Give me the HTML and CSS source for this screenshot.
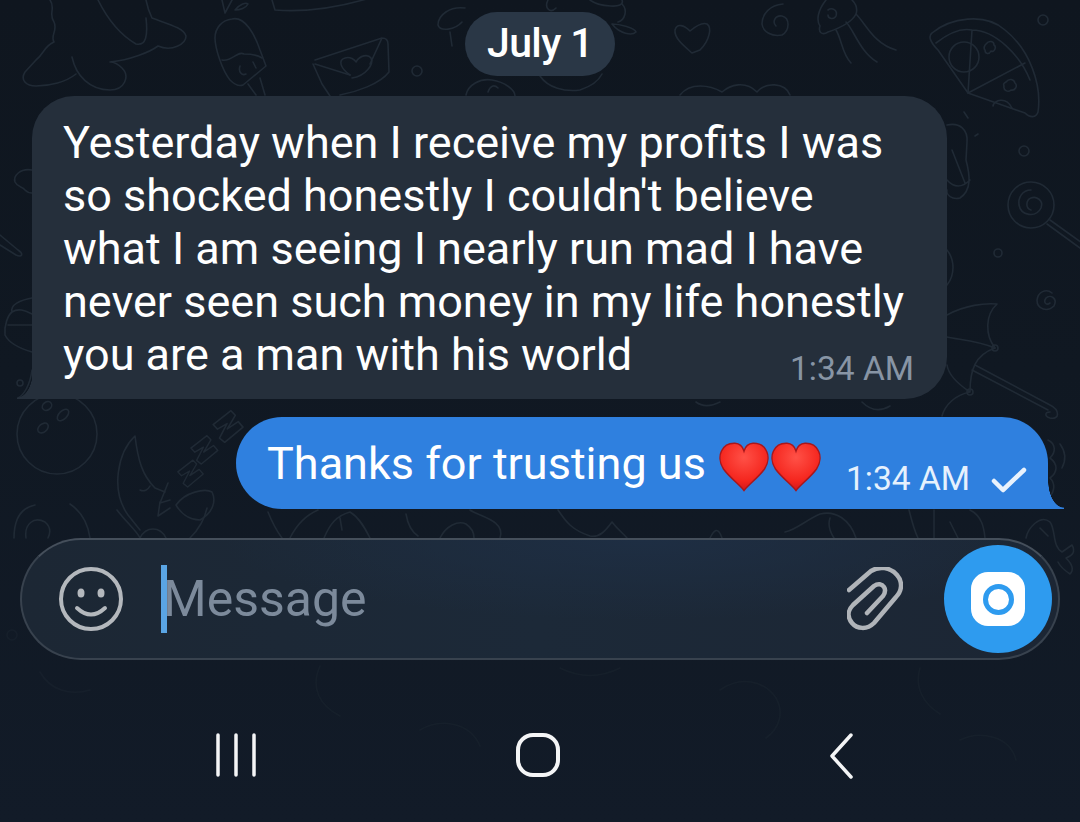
FILE: index.html
```html
<!DOCTYPE html>
<html lang="en">
<head>
<meta charset="utf-8">
<title>Chat</title>
<link rel="stylesheet" href="styles.css">
</head>
<body>
<main class="screen">
  <svg class="doodles" viewBox="0 0 1080 822" fill="none" stroke="currentColor" stroke-width="1.6" stroke-linecap="round" stroke-linejoin="round" aria-hidden="true">
    <defs>
      <path id="zed" d="M0 5 L22 0 L24 6 L11 15 L24 13 L26 20 L3 26 L0 20 L13 10 L2 11Z"/>
    </defs>
    <!-- bird, top left -->
    <path d="M50 0 C56 8 48 14 54 22 C58 30 50 36 54 42 C44 46 44 54 36 60 L25 72 C20 80 26 86 36 86 C50 86 66 82 76 74"/>
    <path d="M72 57 C76 76 90 90 110 90 C125 90 130 76 122 68 C116 62 110 62 110 62 C130 60 150 52 158 46 C172 52 186 44 186 36 C184 28 168 24 152 18 C148 10 146 0 146 0"/>
    <path d="M98 0 C108 20 122 36 136 44 C146 46 148 36 146 18"/>
    <!-- ice cream -->
    <path d="M232 19 C245 16 255 35 260 50 L266 66 L243 85 C238 87 234 84 230 80 C222 70 215 48 215 38 C215 28 222 20 232 19Z"/>
    <path d="M222 60 C232 62 238 50 244 54 C250 54 256 54 262 58 M240 66 C238 72 242 76 246 74 M253 62 L256 68 M248 84 L256 95 M260 78 L265 95"/>
    <path d="M222 0 L225 13 L232 0 M235 10 C240 4 246 2 248 4 C246 8 240 10 235 10Z"/>
    <path d="M272 0 L275 10 C300 12 330 10 370 -2"/>
    <!-- envelope -->
    <path d="M315 60 L382 38 C386 38 388 40 388 44 L389 72 C380 84 356 92 340 95 M313 64 L322 84 L330 96 M315 64 L350 75 M382 38 L370 64"/>
    <path d="M350 75 C340 68 338 60 345 58 C350 56 355 60 356 62 C360 55 368 54 371 58 C374 64 366 76 352 78"/>
    <circle cx="417" cy="71" r="5"/>
    <!-- around the date -->
    <path d="M465 8 C450 6 438 15 438 25 C440 32 455 30 462 22 M450 32 L452 46"/>
    <path d="M548 0 C544 8 550 14 556 8 M590 0 C598 6 626 10 622 0"/>
    <path d="M612 24 C620 24 635 28 636 32 C632 36 620 34 612 24 M622 4 C628 10 625 20 618 22"/>
    <path d="M466 95 C468 85 480 78 492 80 C505 82 515 90 515 96 M488 92 C490 86 494 84 498 88"/>
    <path d="M540 76 C548 88 565 92 580 90 C595 85 600 78 602 74"/>
    <path d="M680 95 C690 82 710 85 722 92 C730 85 745 80 757 92 C765 82 785 82 790 95"/>
    <!-- heart, spiral, jellyfish -->
    <path d="M692 53 C684 46 674 38 675 30 C677 23 684 25 690 31 C696 26 702 22 707 24 C712 27 710 40 700 50Z"/>
    <path d="M783 4 C770 5 762 14 762 24 C763 32 772 37 782 35 C790 30 790 18 782 16 C775 15 772 22 776 26"/>
    <path d="M826 0 C818 10 816 20 820 26 C818 32 822 36 828 32 C840 28 852 22 856 14 C858 8 856 4 852 0"/>
    <path d="M856 14 C866 24 874 44 896 50 M846 22 C854 30 860 52 877 62 M836 30 C842 40 842 54 851 63 M828 10 C832 7 838 10 836 16 C834 20 828 19 828 15"/>
    <circle cx="1043" cy="20" r="5"/>
    <!-- pizza -->
    <path d="M932 33 C950 18 985 12 1005 30 C1030 50 1042 85 1038 112 C1036 118 1030 118 1025 113 L968 93 L938 50 C930 42 928 36 932 33Z"/>
    <path d="M936 43 C950 32 962 28 972 30 C995 30 1020 55 1030 80 M968 93 L972 30 M968 93 L1025 63"/>
    <circle cx="964" cy="57" r="15"/>
    <path d="M986 44c3-4 8-3 8 1 3 2 0 8-3 6-2 4-6 3-6-1-2-2 0-5 1-6ZM1006 82c3-4 8-3 9 1 3 3 0 8-4 7-3 3-8 0-7-4-1-2 0-3 2-4ZM993 106 C994 100 1006 96 1012 108"/>
    <!-- right column -->
    <path d="M947 125 C960 122 968 130 967 142 L966 160 C970 175 972 190 960 198 C952 200 946 195 947 190 M952 150 L965 183 M947 180 C954 188 962 188 970 180"/>
    <path d="M964 112 L968 118 M975 136 L978 134"/>
    <circle cx="1024" cy="151" r="5"/>
    <circle cx="1031" cy="205" r="23"/>
    <path d="M1031 190 C1022 190 1018 198 1019 205 C1021 216 1036 218 1041 208 C1044 200 1036 196 1031 198 C1026 200 1025 208 1031 210"/>
    <path d="M1050 220 L1082 243 M1047 224 L1080 248"/>
    <circle cx="998" cy="253" r="4"/>
    <path d="M1052 293 C1046 288 1038 292 1037 300 C1037 310 1048 312 1054 306 C1058 298 1050 294 1046 298 C1043 302 1046 306 1050 303"/>
    <path d="M947 250 C955 260 955 275 947 285"/>
    <!-- umbrella -->
    <path d="M947 315 C965 305 985 303 997 304 C985 315 985 335 995 348 C975 340 960 340 947 337"/>
    <path d="M995 348 C975 355 970 370 970 392 C955 382 948 372 947 365 M970 392 C955 395 945 405 942 416"/>
    <circle cx="995" cy="348" r="3"/>
    <circle cx="970" cy="392" r="3"/>
    <path d="M975 365 L1050 405 C1060 410 1060 420 1050 418 C1044 416 1045 412 1050 412 M972 370 L1048 410"/>
    <!-- left column -->
    <path d="M32 170 C20 168 13 176 15 182 C18 188 22 186 25 190 C28 193 32 193 32 193"/>
    <path d="M0 235 L18 250 C24 254 22 258 16 255 L0 245"/>
    <path d="M32 298 C20 300 10 305 12 312 C8 315 4 325 5 335 C10 345 25 350 32 352 M8 325 L32 325 M12 312 C18 308 24 310 32 314"/>
    <circle cx="20" cy="383" r="3"/>
    <path d="M32 370 C30 385 24 395 18 398"/>
    <!-- bowling ball -->
    <circle cx="57" cy="434" r="40"/>
    <ellipse cx="47" cy="406" rx="5" ry="4" transform="rotate(-35 47 406)"/>
    <ellipse cx="63" cy="415" rx="7" ry="4" transform="rotate(-45 63 415)"/>
    <ellipse cx="43" cy="428" rx="6" ry="4" transform="rotate(-40 43 428)"/>
    <!-- moon and z -->
    <path d="M135 436 C118 452 110 490 128 515 L140 530 M135 436 C138 460 142 475 155 488 L165 492"/>
    <path d="M140 490 C144 492 148 490 150 486 M168 483 L160 503 L170 500 M176 505 C185 492 205 488 212 492 C216 500 214 512 200 520 C188 520 180 512 176 505Z"/>
    <use href="#zed" transform="translate(176 468) rotate(-25) scale(.85)"/>
    <use href="#zed" transform="translate(189 444) rotate(-25) scale(.9)"/>
    <use href="#zed" transform="translate(211 420) rotate(-25)"/>
    <!-- middle band -->
    <path d="M14 538 C14 520 20 508 35 505 M26 538 C24 524 34 516 45 522 C52 528 50 534 48 538 M70 504 C82 512 88 524 90 538"/>
    <path d="M117 510 C126 522 136 530 140 538 M160 502 L158 516 L170 508 M207 508 C204 522 198 530 190 538 M140 538 C146 526 160 526 166 538"/>
    <path d="M268 512 C272 522 276 530 282 538 M290 538 C296 526 304 516 318 510 M340 518 L342 530 M324 538 C330 524 336 516 350 512 C360 518 366 530 370 538"/>
    <path d="M406 514 C408 526 412 532 418 536 M440 538 C446 526 458 520 466 524 C472 528 474 534 474 538 M470 510 C478 516 506 520 500 538"/>
    <path d="M558 510 C566 522 572 530 590 536 C600 538 606 530 612 522 C618 530 624 534 627 538"/>
    <path d="M710 538 C714 530 718 526 722 538 M785 532 C796 530 806 520 820 514 C836 510 850 520 856 538 M830 518 C828 524 830 532 834 538"/>
    <path d="M909 510 C912 522 914 530 918 538 M934 510 L934 538 M950 522 L958 538 M970 510 C982 516 984 528 985 538"/>
    <path d="M1026 538 C1028 528 1040 514 1050 522 C1056 530 1052 546 1062 552 L1072 545 C1076 552 1072 556 1066 558 C1072 564 1074 570 1070 574 C1064 570 1060 566 1058 562"/>
    <path d="M1040 528 L1048 536"/>
    <path d="M1048 440 C1056 444 1056 452 1050 458 C1058 464 1058 472 1050 478 C1056 484 1054 492 1050 496 M1060 444 C1066 452 1066 460 1062 468"/>
    <path d="M696 402 C704 408 712 406 720 402 M862 402 C870 410 880 412 890 406"/>
    <!-- under the composer: barely visible -->
    <g class="faint">
      <circle cx="12" cy="635" r="5"/>
      <path d="M40 672 C50 690 70 696 90 690 M320 666 C310 688 320 706 340 716 M560 668 C580 678 600 678 620 668 M720 690 C740 676 764 680 776 698 C784 712 780 728 766 738 M920 668 C914 688 924 704 940 714 M420 730 C440 718 470 722 480 746 M960 740 C980 730 1010 736 1016 760"/>
    </g>
  </svg>

  <section class="chat">
    <div class="date-row"><span class="date">July 1</span></div>

    <article class="bubble incoming">
      <p class="message-text">Yesterday when I receive my profits I was<br>so shocked honestly I couldn't believe<br>what I am seeing I nearly run mad I have<br>never seen such money in my life honestly<br>you are a man with his world</p>
      <time class="time incoming-time">1:34 AM</time>
    </article>

    <article class="bubble outgoing">
      <p class="message-text">Thanks for trusting us</p>
      <span class="hearts">
        <svg class="heart" viewBox="0 0 50 50" aria-hidden="true"><use href="#heart-shape"/></svg>
        <svg class="heart" viewBox="0 0 50 50" aria-hidden="true"><use href="#heart-shape"/></svg>
      </span>
      <time class="time outgoing-time">1:34 AM</time>
      <svg class="check" viewBox="0 0 36 26" fill="none" aria-hidden="true"><path d="M3 14 L12 23 L33 3"/></svg>
    </article>

    <svg class="defs" aria-hidden="true">
      <defs>
        <radialGradient id="heart-fill" cx="50%" cy="30%" r="75%">
          <stop offset="0" stop-color="#ff5147"/>
          <stop offset="0.65" stop-color="#f5271f"/>
          <stop offset="1" stop-color="#c9141a"/>
        </radialGradient>
        <path id="heart-shape" fill="url(#heart-fill)" stroke="#a8171c" stroke-width="1.5" d="M25 48.500 C21 43 10 35 4.500 27 C0 20 0.500 13 2.500 9 C5 3.500 10.500 1 16 1.200 C20 1.400 23.500 4 25 9 C26.500 4 30 1.400 34 1.200 C39.500 1 45 3.500 47.500 9 C49.500 13 50 20 45.500 27 C40 35 29 43 25 48.500Z"/>
      </defs>
    </svg>
  </section>

  <section class="composer">
    <svg class="smile" viewBox="0 0 66 66" fill="none" aria-hidden="true">
      <circle cx="33" cy="33" r="30"/>
      <path d="M19 42 Q33 55 47 42"/>
      <ellipse class="eye" cx="23" cy="27" rx="3.500" ry="4.500"/>
      <ellipse class="eye" cx="43" cy="27" rx="3.500" ry="4.500"/>
    </svg>
    <div class="field">
      <span class="caret"></span>
      <span class="placeholder">Message</span>
    </div>
    <svg class="clip" viewBox="0 0 56 64" fill="none" aria-hidden="true">
      <path d="M2 23 L24 4 C32 -1 43 0 50 8 C56 15 55 24 49 30 L27 56 C20 63 10 62 5 56 C0 50 1 43 6 38 L27 19 C31 16 35 17 37 20 C39 23 38 26 36 29 L20 46"/>
    </svg>
    <button class="send" type="button" aria-label="Camera">
      <span class="lens"></span>
    </button>
  </section>

  <nav class="nav">
    <svg class="recents" viewBox="0 0 42 44" fill="none" aria-hidden="true"><path d="M3 2 V42 M21 2 V42 M39 2 V42"/></svg>
    <svg class="home" viewBox="0 0 44 44" fill="none" aria-hidden="true"><rect x="2" y="2" width="40" height="40" rx="15"/></svg>
    <svg class="back" viewBox="0 0 26 46" fill="none" aria-hidden="true"><path d="M22 2 L3 23 L22 44"/></svg>
  </nav>
</main>
</body>
</html>
```

FILE: styles.css
```css
* { box-sizing: border-box; }

html, body {
  margin: 0;
  height: 100%;
  background: #111a26;
}

.screen {
  position: relative;
  width: 1080px;
  height: 822px;
  overflow: hidden;
  display: flex;
  flex-direction: column;
  color: #fff;
  font-family: Roboto, "Liberation Sans", sans-serif;
  background: linear-gradient(180deg, #0f161f 0%, #101822 45%, #121b28 100%);
}

.doodles {
  position: absolute;
  inset: 0;
  width: 1080px;
  height: 822px;
  color: #202a35;
}

.faint {
  opacity: 0.35;
}

.chat {
  position: relative;
  display: flex;
  flex-direction: column;
  padding-top: 12px;
}

.date-row {
  display: flex;
  justify-content: center;
  padding-bottom: 20px;
}

.date {
  width: 150px;
  height: 64px;
  border-radius: 32px;
  background: #2a3746;
  font-size: 41px;
  line-height: 62px;
  font-weight: 500;
  letter-spacing: -0.6px;
  text-align: center;
}

.bubble {
  position: relative;
}

.bubble::after {
  content: "";
  position: absolute;
  bottom: 0;
  width: 16px;
  height: 28px;
}

.message-text {
  margin: 0;
  font-size: 45px;
  line-height: 53px;
  white-space: nowrap;
}

.incoming {
  width: 915px;
  height: 303px;
  margin-left: 32px;
  padding: 20px 31px 0;
  background: #252f3b;
  border-radius: 42px 42px 42px 0;
}

.incoming::after {
  left: -15px;
  background: radial-gradient(ellipse 16px 27px at 0 0, transparent 97%, #252f3b 100%);
}

.time {
  position: absolute;
  font-size: 33.500px;
  line-height: 38px;
  white-space: nowrap;
}

.incoming-time {
  right: 33px;
  bottom: 11px;
  color: #8895a5;
}

.outgoing {
  display: flex;
  align-items: flex-start;
  width: 812px;
  height: 92px;
  margin-top: 18px;
  margin-left: 236px;
  padding: 20px 0 0 31px;
  background: #2f80df;
  border-radius: 46px 46px 0 46px;
}

.outgoing::after {
  right: -16px;
  background: radial-gradient(ellipse 16px 27px at 100% 0, transparent 97%, #2f80df 100%);
}

.hearts {
  display: flex;
  gap: 2px;
  margin-left: 13px;
  margin-top: 5px;
}

.heart {
  display: block;
  width: 50px;
  height: 50px;
}

.outgoing-time {
  right: 78px;
  bottom: 11px;
  color: #e6f1fd;
}

.check {
  position: absolute;
  right: 21px;
  bottom: 16px;
  width: 36px;
  height: 26px;
  stroke: #e9f2fd;
  stroke-width: 4.500;
  stroke-linecap: round;
  stroke-linejoin: round;
}

.defs {
  position: absolute;
  width: 0;
  height: 0;
}

.composer {
  position: relative;
  display: flex;
  align-items: center;
  width: 1040px;
  height: 122px;
  margin-top: 29px;
  margin-left: 20px;
  padding: 0 6px 0 36px;
  border: 2px solid #38424e;
  border-top-color: #454f5b;
  border-radius: 61px;
  background:
    radial-gradient(ellipse 420px 80px at 620px 0, #1e2e43 0%, rgba(30, 46, 67, 0) 100%),
    linear-gradient(90deg, #1c2734 0%, #1c2938 50%, #1c2634 100%);
}

.smile {
  flex: none;
  width: 66px;
  height: 66px;
  stroke: #b4b8bd;
  stroke-width: 4;
  stroke-linecap: round;
}

.eye {
  fill: #b4b8bd;
  stroke: none;
}

.field {
  display: flex;
  align-items: center;
  flex: 1;
  margin-left: 37px;
}

.caret {
  flex: none;
  width: 6px;
  height: 68px;
  background: #5aa5e4;
}

.placeholder {
  font-size: 50px;
  line-height: 68px;
  color: #7c8a9b;
  margin-left: -4px;
}

.clip {
  flex: none;
  width: 56px;
  height: 64px;
  margin-right: 41px;
  stroke: #b0b4b9;
  stroke-width: 4.500;
  stroke-linecap: round;
  stroke-linejoin: round;
}

.send {
  flex: none;
  display: flex;
  align-items: center;
  justify-content: center;
  width: 108px;
  height: 108px;
  padding: 0;
  border: 0;
  border-radius: 50%;
  background: #2e9bef;
}

.lens {
  display: flex;
  align-items: center;
  justify-content: center;
  width: 54px;
  height: 54px;
  border-radius: 17px;
  background: #fff;
}

.lens::before {
  content: "";
  box-sizing: border-box;
  width: 31px;
  height: 31px;
  border: 5px solid #2e9bef;
  border-radius: 50%;
  background: #fff;
}

.nav {
  position: relative;
  display: flex;
  align-items: flex-start;
  margin-top: 73px;
  padding-left: 215px;
}

.nav svg {
  flex: none;
  display: block;
  stroke: #f4f5f6;
  stroke-linecap: round;
  stroke-linejoin: round;
}

.recents {
  width: 42px;
  height: 44px;
  stroke-width: 3.500;
}

.home {
  width: 44px;
  height: 44px;
  margin-left: 259px;
  stroke-width: 4;
}

.back {
  width: 26px;
  height: 46px;
  margin-left: 269px;
  stroke-width: 3.500;
}
```
